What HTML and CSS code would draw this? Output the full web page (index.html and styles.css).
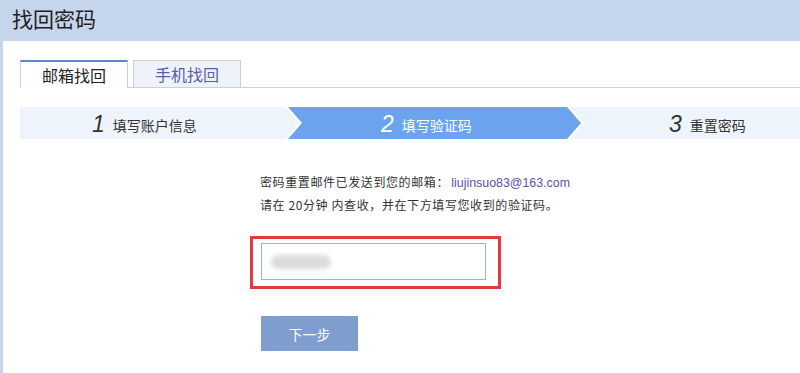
FILE: index.html
```html
<!DOCTYPE html>
<html lang="zh-CN">
<head>
<meta charset="utf-8">
<title>找回密码</title>
<link rel="stylesheet" href="styles.css">
</head>
<body>
<div class="page">
  <header class="header"><h1 class="title">找回密码</h1></header>
  <main class="panel">
    <nav class="tabs">
      <div class="tab tab-active">邮箱找回</div>
      <div class="tab tab-idle">手机找回</div>
    </nav>
    <div class="steps">
      <div class="step step-first"><span class="num">1</span><span class="label">填写账户信息</span></div>
      <div class="step step-mid step-current"><span class="num">2</span><span class="label">填写验证码</span></div>
      <div class="step step-last"><span class="num">3</span><span class="label">重置密码</span></div>
    </div>
    <section class="content">
      <p class="msg">密码重置邮件已发送到您的邮箱： <span class="email">liujinsuo83@163.com</span></p>
      <p class="msg">请在 20分钟 内查收，并在下方填写您收到的验证码。</p>
      <div class="highlight">
        <div class="field"><span class="blur"></span></div>
      </div>
      <button class="btn" type="button">下一步</button>
    </section>
  </main>
</div>
</body>
</html>
```
FILE: styles.css
```css
* { box-sizing: border-box; }
html, body { margin: 0; padding: 0; }
body {
  width: 800px;
  height: 373px;
  overflow: hidden;
  background: #c5d5ec;
  font-family: "Noto Sans CJK SC", "Liberation Sans", sans-serif;
  color: #333;
}
.page { display: flex; flex-direction: column; height: 373px; }
.header {
  height: 41px;
  display: flex;
  align-items: center;
  padding-left: 12px;
  flex-shrink: 0;
}
.title {
  margin: 0;
  font-size: 21px;
  font-weight: normal;
  color: #1e1e1e;
  line-height: 1;
  margin-top: -4px;
}
.panel {
  flex: 1;
  margin-left: 3px;
  background: #fff;
  padding-left: 17px;
  padding-top: 19px;
}
.tabs {
  display: flex;
  gap: 5px;
  height: 28px;
  border-bottom: 1px solid #cfcfcf;
}
.tab {
  width: 108px;
  height: 28px;
  margin-bottom: -1px;
  display: flex;
  align-items: center;
  justify-content: center;
  font-size: 16px;
  line-height: 1;
}
.tab-active {
  background: #fff;
  border-top: 2px solid #5b8ad3;
  border-left: 1px solid #cfcfcf;
  border-right: 1px solid #cfcfcf;
  color: #222;
}
.tab-idle {
  background: #eef3fb;
  border: 1px solid #cfcfcf;
  color: #5a5ea8;
}
.steps {
  display: flex;
  height: 32px;
  margin-top: 19px;
}
.step {
  height: 32px;
  display: flex;
  align-items: center;
  background: #eef4fc;
  color: #333;
}
.step-first {
  width: 279px;
  padding-left: 72px;
  clip-path: polygon(0 0, calc(100% - 14px) 0, 100% 50%, calc(100% - 14px) 100%, 0 100%);
}
.step-mid {
  width: 293px;
  margin-left: -11px;
  padding-left: 93px;
  clip-path: polygon(0 0, calc(100% - 14px) 0, 100% 50%, calc(100% - 14px) 100%, 0 100%, 14px 50%);
}
.step-last {
  flex: 1;
  margin-left: -11px;
  padding-left: 99px;
  clip-path: polygon(0 0, 100% 0, 100% 100%, 0 100%, 14px 50%);
}
.step-current { background: #6ca3ef; color: #fff; }
.num {
  font-family: "Liberation Sans", sans-serif;
  font-style: italic;
  font-size: 23px;
  line-height: 1;
  margin-right: 8px;
  margin-top: 2px;
}
.label { font-size: 14px; line-height: 1; margin-top: 3px; }
.content {
  padding-left: 240px;
  padding-top: 32px;
  display: flex;
  flex-direction: column;
  align-items: flex-start;
}
.msg {
  margin: 0;
  font-size: 12px;
  letter-spacing: 0.6px;
  line-height: 21px;
  color: #333;
}
.email {
  font-family: "Liberation Sans", sans-serif;
  color: #5a52a8;
  font-size: 12.4px;
  letter-spacing: 0;
  margin-left: -1px;
}
.highlight {
  margin-top: 21px;
  margin-left: -10px;
  border: 3px solid #e23b3f;
  padding: 4px 12px 6px 8px;
}
.field {
  width: 225px;
  height: 37px;
  border: 1px solid #94b4e8;
  background: #fff;
  display: flex;
  align-items: center;
  padding-left: 9px;
}
.blur {
  display: block;
  width: 60px;
  height: 14px;
  border-radius: 7px;
  background: #dcdcdc;
  filter: blur(2px);
}
.btn {
  margin-top: 27px;
  margin-left: 1px;
  width: 97px;
  height: 35px;
  border: none;
  background: #7f9dcd;
  color: #fff;
  font-family: "Noto Sans CJK SC", sans-serif;
  font-size: 14px;
  padding: 0;
}
```
